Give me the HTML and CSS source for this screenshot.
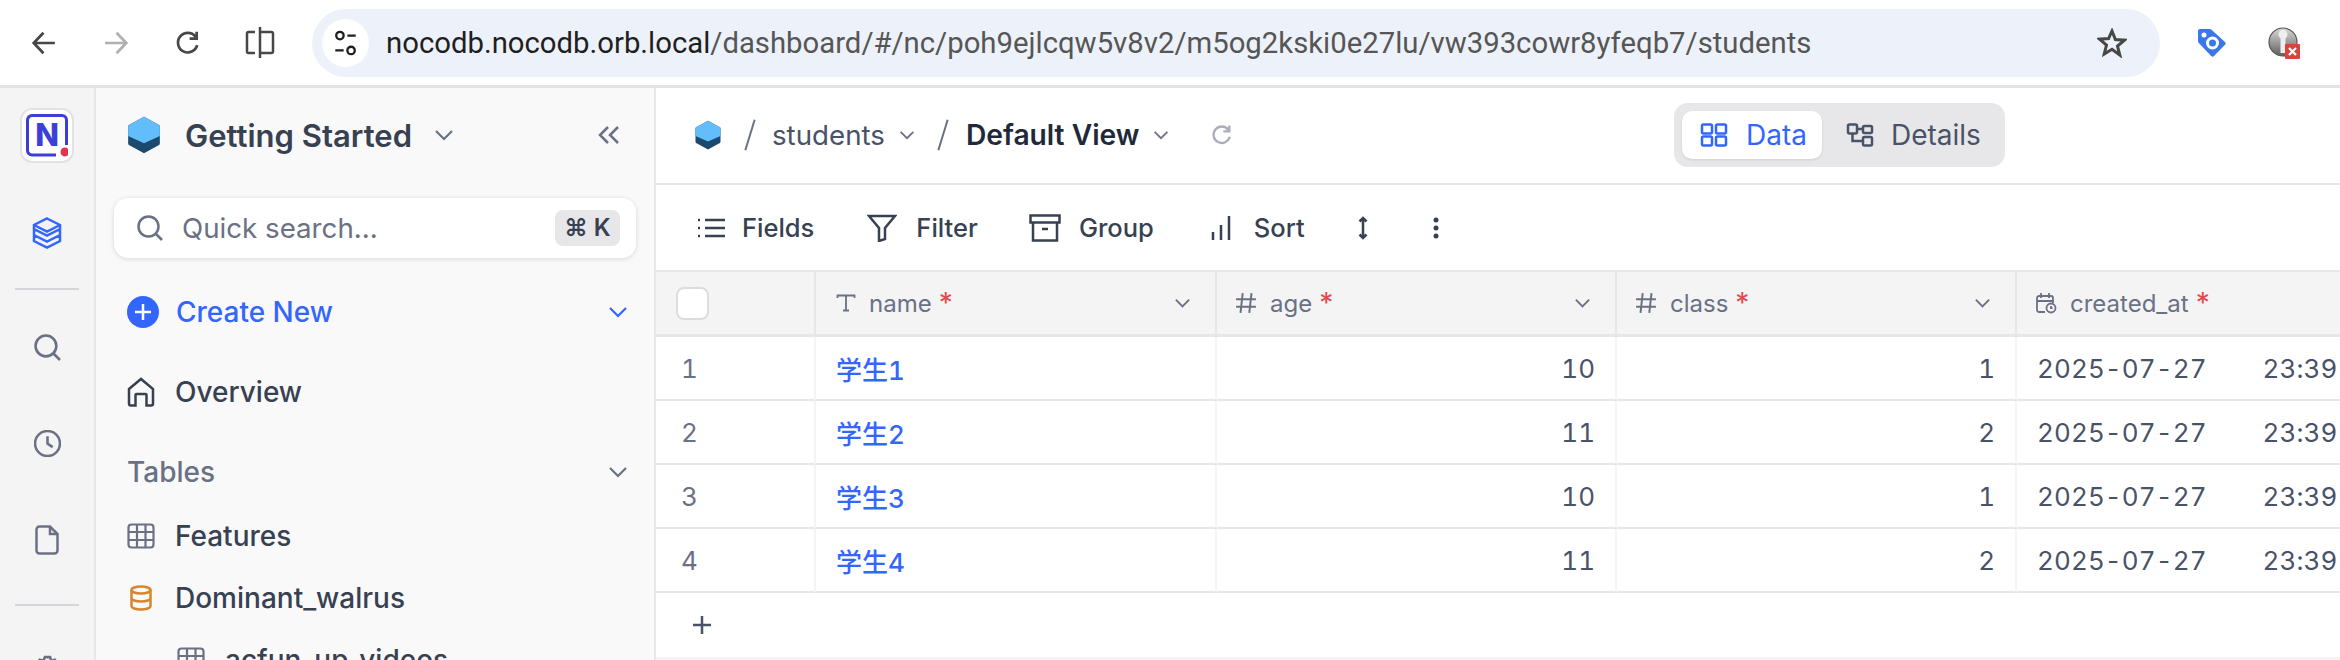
FILE: index.html
```html
<!DOCTYPE html>
<html lang="en">
  <head>
    <meta charset="UTF-8" />
    <meta name="viewport" content="width=device-width, initial-scale=1.0" />
    <title>students - NocoDB</title>
    <link rel="stylesheet" href="styles.css">
  </head>
  <body>
    <header class="browser-bar">
      <div class="nav-buttons">
        <svg class="nav-icon" viewBox="0 0 24 24"><path d="M22 12H3M11.5 2.5 2.5 12l9 9.5" /></svg>
        <svg class="nav-icon nav-icon-off" viewBox="0 0 24 24"><path d="M2 12h19M12.5 2.5l9 9.5-9 9.5" /></svg>
        <svg class="nav-icon" viewBox="0 0 24 24"><path d="M20.5 14a9 9 0 1 1-1.6-7.8M20 1.5V8h-6.5" /></svg>
        <svg class="nav-icon nav-icon-split" viewBox="0 0 30 33"><path d="M10 6H3.500a1.500 1.500 0 0 0-1.500 1.500v18a1.500 1.500 0 0 0 1.500 1.500H10M15 1v31M15 6h11.500a1.500 1.500 0 0 1 1.500 1.500v18a1.500 1.500 0 0 1-1.500 1.500H15" /></svg>
      </div>
      <div class="address">
        <span class="site-button">
          <svg class="site-icon" viewBox="0 0 24 28"><circle cx="6" cy="6" r="4" /><path d="M14 6h9M1 22h9" /><circle cx="18" cy="22" r="4" /></svg>
        </span>
        <span class="url"><span class="url-host">nocodb.nocodb.orb.local</span>/dashboard/#/nc/poh9ejlcqw5v8v2/m5og2kski0e27lu/vw393cowr8yfeqb7/students</span>
        <svg class="star-icon" viewBox="0 0 30 30"><path d="M15 3l3.400 8.600 9.100.6-7 5.900 2.300 8.900L15 21.200l-7.800 4.800 2.300-8.900-7-5.900 9.100-.6z" /></svg>
      </div>
      <svg class="ext-tag" viewBox="0 0 28 28"><path d="M2 0h9.500a3 3 0 0 1 2 .8L27 13a2 2 0 0 1 0 2.800L16 27a2 2 0 0 1-2.800 0L.8 14a3 3 0 0 1-.8-2V2a2 2 0 0 1 2-2z" fill="#3b78e7" /><circle cx="6" cy="6" r="2.500" fill="#fff" /><circle cx="14.500" cy="14" r="5" fill="none" stroke="#fff" stroke-width="3" /></svg>
      <svg class="ext-key" viewBox="0 0 32 32">
        <defs><linearGradient id="keyFill" x1="0" x2="0" y1="0" y2="1"><stop offset="0" stop-color="#d8d8d8" /><stop offset="1" stop-color="#5f5f5f" /></linearGradient></defs>
        <circle cx="15" cy="15" r="14" fill="url(#keyFill)" stroke="#555" stroke-width="1.200" />
        <path d="M15 3a4.500 4.500 0 0 0-2.500 8.200V26h5V11.200A4.500 4.500 0 0 0 15 3z" fill="#eee" />
        <rect x="17" y="17" width="15" height="15" rx="1" fill="#d8453a" />
        <path d="M21 21l7 7M28 21l-7 7" stroke="#fff" stroke-width="2.200" />
      </svg>
    </header>

    <div class="app">
      <nav class="rail">
        <div class="rail-logo">
          <svg class="logo-mark" viewBox="0 0 42 43">
            <path d="M30 41H6a4.500 4.500 0 0 1-4.500-4.500V6A4.500 4.500 0 0 1 6 1.500h30A4.500 4.500 0 0 1 40.500 6v25" fill="none" stroke="#3b3fd8" stroke-width="3" />
            <text x="21" y="32" text-anchor="middle" class="logo-letter">N</text>
            <circle cx="39" cy="38" r="4.500" fill="#e3344f" />
          </svg>
        </div>
        <svg class="rail-icon rail-layers" viewBox="0 0 30 32"><path d="M15 1.500 28 8v4l-13 6.500L2 12V8zM2 8l13 6.500L28 8M2 12v6l13 6.500L28 18v-6M2 18v6l13 6.500L28 24v-6" /></svg>
        <div class="rail-line"></div>
        <svg class="rail-icon rail-search" viewBox="0 0 26 26"><circle cx="11.500" cy="11.500" r="10" /><path d="M19 19l6 6" /></svg>
        <svg class="rail-icon rail-clock" viewBox="0 0 26 26"><circle cx="13" cy="13" r="12" /><path d="M13 6v7l5 3.500" /></svg>
        <svg class="rail-icon rail-file" viewBox="0 0 24 30"><path d="M15 1.500H4.500a3 3 0 0 0-3 3v21a3 3 0 0 0 3 3h15a3 3 0 0 0 3-3V9zM15 1.500V9h7.500" /></svg>
        <div class="rail-line rail-line-low"></div>
        <svg class="rail-icon rail-gear" viewBox="0 0 26 26"><circle cx="13" cy="13" r="4" /><path d="M10.500 2h5l1 3.500 3.500-1 2.500 4-2.500 2.500v4l2.500 2.500-2.500 4-3.500-1-1 3.500h-5l-1-3.500-3.500 1-2.500-4L5.500 15v-4L3 8.500l2.500-4 3.500 1z" /></svg>
      </nav>

      <aside class="sidebar">
        <div class="base-head">
          <svg class="hex hex-big" viewBox="0 0 24 24"><use href="#hexShape" /></svg>
          <span class="base-name">Getting Started</span>
          <svg class="chev chev-base" viewBox="0 0 20 12"><path d="M2 2l8 8 8-8" /></svg>
          <svg class="collapse" viewBox="0 0 22 20"><path d="M10 2 2 10l8 8M20 2l-8 8 8 8" /></svg>
        </div>
        <div class="quick-search">
          <svg class="search-glass" viewBox="0 0 26 26"><circle cx="11.500" cy="11.500" r="10" /><path d="M19 19l6 6" /></svg>
          <span class="quick-text">Quick search...</span>
          <span class="kbd">⌘ K</span>
        </div>
        <div class="side-row row-create">
          <svg class="plus-circle" viewBox="0 0 32 32"><circle cx="16" cy="16" r="16" fill="#3366ff" /><path d="M16 8v16M8 16h16" stroke="#fff" stroke-width="2.500" /></svg>
          <span class="create-text">Create New</span>
          <svg class="chev chev-side chev-blue" viewBox="0 0 20 12"><path d="M2 2l8 8 8-8" /></svg>
        </div>
        <div class="side-row row-overview">
          <svg class="side-icon icon-home" viewBox="0 0 28 30"><path d="M2 12 14 2l12 10v14.500a2 2 0 0 1-2 2h-4.500V18a1 1 0 0 0-1-1h-9a1 1 0 0 0-1 1v10.500H4a2 2 0 0 1-2-2z" /></svg>
          <span class="side-text">Overview</span>
        </div>
        <div class="side-row row-tables">
          <span class="tables-text">Tables</span>
          <svg class="chev chev-side" viewBox="0 0 20 12"><path d="M2 2l8 8 8-8" /></svg>
        </div>
        <div class="side-row row-features">
          <svg class="side-icon icon-table" viewBox="0 0 28 26"><rect x="1.500" y="1.500" width="25" height="23" rx="3" /><path d="M1.500 9h25M1.500 17h25M10 1.500v23M18.500 1.500v23" /></svg>
          <span class="side-text">Features</span>
        </div>
        <div class="side-row row-dominant">
          <svg class="side-icon icon-db" viewBox="0 0 22 26"><ellipse cx="11" cy="5" rx="9.500" ry="3.500" /><path d="M1.500 5v16c0 2 4.300 3.500 9.500 3.500s9.500-1.500 9.500-3.500V5M1.500 13c0 2 4.300 3.500 9.500 3.500s9.500-1.500 9.500-3.500" /></svg>
          <span class="side-text">Dominant_walrus</span>
        </div>
        <div class="side-row row-nested">
          <svg class="side-icon icon-table" viewBox="0 0 28 26"><rect x="1.500" y="1.500" width="25" height="23" rx="3" /><path d="M1.500 9h25M1.500 17h25M10 1.500v23M18.500 1.500v23" /></svg>
          <span class="side-text">acfun_up_videos</span>
        </div>
      </aside>

      <main class="content">
        <div class="crumbs">
          <svg class="hex hex-small" viewBox="0 0 24 24"><use href="#hexShape" /></svg>
          <span class="slash"></span>
          <span class="crumb-table">students</span>
          <svg class="chev chev-crumb" viewBox="0 0 20 12"><path d="M2 2l8 8 8-8" /></svg>
          <span class="slash slash-two"></span>
          <span class="crumb-view">Default View</span>
          <svg class="chev chev-crumb" viewBox="0 0 20 12"><path d="M2 2l8 8 8-8" /></svg>
          <svg class="reload" viewBox="0 0 24 24"><path d="M20.500 14a9 9 0 1 1-1.600-7.800M20 1.500V8h-6.500" /></svg>
          <div class="tabs">
            <div class="tab tab-on">
              <svg class="tab-icon" viewBox="0 0 28 24"><rect x="2" y="1.500" width="10" height="9" rx="1.500" /><rect x="16" y="1.500" width="10" height="9" rx="1.500" /><rect x="2" y="13.500" width="10" height="9" rx="1.500" /><rect x="16" y="13.500" width="10" height="9" rx="1.500" /></svg>
              <span>Data</span>
            </div>
            <div class="tab">
              <svg class="tab-icon" viewBox="0 0 28 24"><rect x="2" y="1.500" width="9" height="9" rx="1.500" /><rect x="17" y="3" width="9" height="7" rx="1.500" /><rect x="17" y="14" width="9" height="8.500" rx="1.500" /><path d="M11 6h6M6.500 10.500V18H17" /></svg>
              <span>Details</span>
            </div>
          </div>
        </div>

        <div class="toolbar">
          <div class="tool tool-fields">
            <svg class="tool-icon icon-list" viewBox="0 0 28 20"><path d="M8 2h20M8 10h20M8 18h20M1 2h2M1 10h2M1 18h2" /></svg>
            <span>Fields</span>
          </div>
          <div class="tool tool-filter">
            <svg class="tool-icon icon-filter" viewBox="0 0 30 28"><path d="M2 2h26L18 14v11l-6 2V14z" /></svg>
            <span>Filter</span>
          </div>
          <div class="tool tool-group">
            <svg class="tool-icon icon-group" viewBox="0 0 32 28"><rect x="1.500" y="1.500" width="29" height="7" /><path d="M4 8.500v18h24v-18M13 15h6" /></svg>
            <span>Group</span>
          </div>
          <div class="tool tool-sort">
            <svg class="tool-icon icon-sort" viewBox="0 0 20 26"><path d="M2 17v8M10 10v15M18 1v24" /></svg>
            <span>Sort</span>
          </div>
          <svg class="tool-icon icon-height" viewBox="0 0 10 24"><path d="M5 2v20M1.500 5.500 5 2l3.500 3.500M1.500 18.500 5 22l3.500-3.500" /></svg>
          <svg class="icon-dots" viewBox="0 0 8 22"><circle cx="4" cy="3" r="2.500" /><circle cx="4" cy="11" r="2.500" /><circle cx="4" cy="19" r="2.500" /></svg>
        </div>

        <div class="grid">
          <div class="cell head num-col"><span class="checkbox"></span></div>
          <div class="cell head">
            <svg class="type-icon" viewBox="0 0 20 18"><path d="M1.500 4V1.500h17V4M10 1.500v15M7 16.500h6" /></svg>
            <span class="col-name">name</span><span class="req">*</span>
            <svg class="chev chev-col" viewBox="0 0 20 12"><path d="M2 2l8 8 8-8" /></svg>
          </div>
          <div class="cell head">
            <svg class="type-icon type-wide" viewBox="0 0 20 20"><path d="M7 1 5 19M15 1l-2 18M1 6.500h18M1 13.500h18" /></svg>
            <span class="col-name">age</span><span class="req">*</span>
            <svg class="chev chev-col" viewBox="0 0 20 12"><path d="M2 2l8 8 8-8" /></svg>
          </div>
          <div class="cell head">
            <svg class="type-icon type-wide" viewBox="0 0 20 20"><path d="M7 1 5 19M15 1l-2 18M1 6.500h18M1 13.500h18" /></svg>
            <span class="col-name">class</span><span class="req">*</span>
            <svg class="chev chev-col" viewBox="0 0 20 12"><path d="M2 2l8 8 8-8" /></svg>
          </div>
          <div class="cell head">
            <svg class="type-icon type-wide" viewBox="0 0 22 22"><path d="M10 20H4a2 2 0 0 1-2-2V6a2 2 0 0 1 2-2h12a2 2 0 0 1 2 2v5M6 1v5M14 1v5M2 9h16" /><circle cx="16" cy="16" r="4.500" /><path d="M16 14v2h1.500" /></svg>
            <span class="col-name">created_at</span><span class="req">*</span>
          </div>

          <div class="cell num-col row-num">1</div>
          <div class="cell"><a class="pk">学生1</a></div>
          <div class="cell cell-right">10</div>
          <div class="cell cell-right">1</div>
          <div class="cell cell-date"><span>2025-07-27</span><span class="time">23:39</span></div>

          <div class="cell num-col row-num">2</div>
          <div class="cell"><a class="pk">学生2</a></div>
          <div class="cell cell-right">11</div>
          <div class="cell cell-right">2</div>
          <div class="cell cell-date"><span>2025-07-27</span><span class="time">23:39</span></div>

          <div class="cell num-col row-num">3</div>
          <div class="cell"><a class="pk">学生3</a></div>
          <div class="cell cell-right">10</div>
          <div class="cell cell-right">1</div>
          <div class="cell cell-date"><span>2025-07-27</span><span class="time">23:39</span></div>

          <div class="cell num-col row-num">4</div>
          <div class="cell"><a class="pk">学生4</a></div>
          <div class="cell cell-right">11</div>
          <div class="cell cell-right">2</div>
          <div class="cell cell-date"><span>2025-07-27</span><span class="time">23:39</span></div>
        </div>

        <div class="add-row">
          <svg class="add-icon" viewBox="0 0 20 20"><path d="M10 1v18M1 10h18" /></svg>
        </div>
      </main>
    </div>

    <svg class="svg-defs" width="0" height="0">
      <symbol id="hexShape" viewBox="0 0 24 24">
        <path d="M12 .5l9.500 5.200a1 1 0 0 1 .5.900v10.800a1 1 0 0 1-.5.900L12 23.500 2.500 18.300a1 1 0 0 1-.5-.900V6.600a1 1 0 0 1 .5-.900z" fill="#1b4a6d" />
        <path d="M12 .5l9.500 5.200a1 1 0 0 1 .5.900v6.100L12 17.200 2 12.700V6.600a1 1 0 0 1 .5-.900z" fill="#63bdfb" />
      </symbol>
    </svg>
  </body>
</html>
```

FILE: styles.css
```css
html {
  background-color: #ffffff;
  font-family: "Inter", "Noto Sans CJK SC", sans-serif;
}

body {
  margin: 0;
  height: 660px;
  overflow: hidden;
  display: flex;
  flex-direction: column;
}

svg {
  flex: none;
  fill: none;
  stroke: currentColor;
  stroke-width: 2.5;
}

.svg-defs {
  position: absolute;
}

/* browser chrome */
.browser-bar {
  flex: none;
  height: 85px;
  border-bottom: 3px solid #e3e3e3;
  display: flex;
  align-items: center;
}

.nav-buttons {
  width: 312px;
  padding-left: 8px;
  box-sizing: border-box;
  display: flex;
  align-items: center;
  color: #474747;
}

.nav-icon {
  width: 26px;
  height: 26px;
  margin: 0 23px;
}

.nav-icon-off {
  color: #b0b0b0;
}

.nav-icon-split {
  width: 30px;
  height: 33px;
  margin: 0 21px;
}

.address {
  width: 1848px;
  height: 68px;
  border-radius: 34px;
  background-color: #edf2fa;
  display: flex;
  align-items: center;
  padding-left: 10px;
  box-sizing: border-box;
}

.site-button {
  width: 47px;
  height: 48px;
  border-radius: 50%;
  background-color: #ffffff;
  display: flex;
  align-items: center;
  justify-content: center;
}

.site-icon {
  width: 23px;
  height: 26px;
  color: #1f1f1f;
}

.url {
  margin-left: 17px;
  width: 1711px;
  font-family: "Roboto", sans-serif;
  font-size: 29.3px;
  color: #565656;
  white-space: nowrap;
}

.url-host {
  color: #1f1f1f;
}

.star-icon {
  width: 30px;
  height: 30px;
  color: #474747;
  stroke-width: 3;
}

.ext-tag {
  width: 28px;
  height: 28px;
  margin-left: 38px;
  stroke: none;
}

.ext-key {
  width: 32px;
  height: 32px;
  margin-left: 42px;
  stroke: none;
}

/* app shell */
.app {
  flex: 1;
  min-height: 0;
  display: flex;
}

.rail {
  flex: none;
  width: 94px;
  border-right: 2px solid #e7e7e9;
  background-color: #f4f4f5;
  overflow: hidden;
  display: flex;
  flex-direction: column;
  align-items: center;
  color: #6a7184;
}

.rail-logo {
  flex: none;
  width: 54px;
  height: 55px;
  margin-top: 20px;
  box-sizing: border-box;
  border: 2px solid #e2e2e4;
  border-radius: 12px;
  background-color: #ffffff;
  display: flex;
  align-items: center;
  justify-content: center;
}

.logo-mark {
  width: 42px;
  height: 43px;
  stroke: none;
}

.logo-letter {
  font-family: "Inter", sans-serif;
  font-size: 31px;
  font-weight: 800;
  fill: #3b3fd8;
}

.rail-icon {
  width: 27px;
  height: 27px;
}

.rail-layers {
  width: 30px;
  height: 32px;
  margin-top: 54px;
  color: #3366ff;
}

.rail-line {
  flex: none;
  width: 64px;
  height: 2px;
  margin-top: 39px;
  background-color: #d5d5d9;
}

.rail-search {
  margin-top: 44px;
}

.rail-clock {
  margin-top: 69px;
}

.rail-file {
  width: 24px;
  height: 30px;
  margin-top: 68px;
}

.rail-line-low {
  margin-top: 49px;
}

.rail-gear {
  margin-top: 49px;
}

/* sidebar */
.sidebar {
  flex: none;
  width: 514px;
  border-right: 2px solid #e7e7e9;
  background-color: #f9f9fa;
  overflow: hidden;
  padding: 0 26px 0 18px;
}

.base-head {
  height: 94px;
  display: flex;
  align-items: center;
  padding-left: 11px;
}

.hex-big {
  width: 38px;
  height: 38px;
  stroke: none;
}

.base-name {
  margin-left: 22px;
  font-size: 31px;
  font-weight: 600;
  color: #374151;
}

.chev {
  color: #6a7184;
  stroke-width: 2.2;
}

.chev-base {
  width: 20px;
  height: 12px;
  margin-left: 22px;
}

.collapse {
  width: 22px;
  height: 20px;
  margin-left: auto;
  margin-right: 8px;
  color: #6a7184;
}

.quick-search {
  height: 60px;
  margin-top: 16px;
  border-radius: 14px;
  background-color: #ffffff;
  box-shadow: 0 1px 5px rgba(0, 0, 0, 0.14);
  display: flex;
  align-items: center;
  padding: 0 16px 0 23px;
  width: 522px;
  box-sizing: border-box;
}

.search-glass {
  width: 26px;
  height: 26px;
  color: #6a7184;
}

.quick-text {
  margin-left: 19px;
  font-size: 27.7px;
  color: #6a7184;
}

.kbd {
  margin-left: auto;
  width: 65px;
  height: 36px;
  border-radius: 8px;
  background-color: #e7e7e9;
  font-size: 24px;
  font-weight: 600;
  line-height: 36px;
  text-align: center;
  color: #374151;
}

.side-row {
  height: 64px;
  display: flex;
  align-items: center;
  width: 514px;
  padding-left: 13px;
  box-sizing: border-box;
}

.row-create {
  margin-top: 22px;
}

.plus-circle {
  width: 32px;
  height: 32px;
  stroke: none;
}

.create-text {
  margin-left: 17px;
  font-size: 28px;
  font-weight: 500;
  color: #3366ff;
}

.chev-side {
  width: 20px;
  height: 12px;
  margin-left: auto;
}

.chev-blue {
  color: #3366ff;
}

.row-overview {
  margin-top: 16px;
}

.side-icon {
  width: 28px;
  height: 28px;
  color: #6a7184;
  stroke-width: 2.2;
}

.icon-home {
  color: #374151;
  height: 30px;
  stroke-width: 2.5;
}

.side-text {
  margin-left: 20px;
  font-size: 28px;
  font-weight: 500;
  color: #374151;
}

.row-tables {
  margin-top: 16px;
}

.tables-text {
  font-size: 28px;
  font-weight: 500;
  color: #6a7184;
}

.row-dominant {
  height: 60px;
}

.icon-db {
  color: #d6862b;
  width: 22px;
  height: 26px;
  margin-left: 3px;
  margin-right: 3px;
  stroke-width: 2.5;
}

.row-nested {
  padding-left: 63px;
}

/* main area */
.content {
  flex: 1;
  min-width: 0;
  overflow: hidden;
}

.crumbs {
  height: 93px;
  padding-bottom: 2px;
  border-bottom: 2px solid #e7e7e9;
  display: flex;
  align-items: center;
  padding-left: 37px;
}

.hex-small {
  width: 30px;
  height: 30px;
  stroke: none;
}

.slash {
  width: 2px;
  height: 32px;
  margin-left: 26px;
  background-color: #6a7184;
  transform: rotate(17deg);
}

.slash-two {
  margin-left: 27px;
}

.crumb-table {
  margin-left: 21px;
  font-size: 27.7px;
  color: #4a5268;
}

.chev-crumb {
  width: 16px;
  height: 10px;
  margin-left: 14px;
}

.crumb-view {
  margin-left: 22px;
  font-size: 28.2px;
  font-weight: 600;
  color: #1f293a;
}

.reload {
  width: 22px;
  height: 22px;
  margin-left: 42px;
  color: #a9aeb9;
}

.tabs {
  margin-left: auto;
  margin-right: 335px;
  width: 331px;
  height: 64px;
  box-sizing: border-box;
  padding: 8px;
  border-radius: 14px;
  background-color: #e7e7e9;
  display: flex;
  align-items: stretch;
}

.tab {
  display: flex;
  align-items: center;
  gap: 17px;
  padding: 0 24px;
  font-size: 28px;
  color: #4a5268;
}

.tab-on {
  gap: 18px;
  padding: 0 18px;
  width: 140px;
  box-sizing: border-box;
  border-radius: 10px;
  background-color: #ffffff;
  color: #3366ff;
  box-shadow: 0 1px 3px rgba(0, 0, 0, 0.1);
}

.tab-icon {
  width: 28px;
  height: 24px;
}

.toolbar {
  height: 85px;
  display: flex;
  align-items: center;
  border-bottom: 2px solid #e7e7e9;
  padding-left: 41px;
  font-size: 25.5px;
  font-weight: 500;
  color: #374151;
}

.tool {
  display: flex;
  align-items: center;
}

.tool-icon {
  color: #374151;
}

.icon-list {
  width: 28px;
  height: 20px;
}

.tool-fields span {
  margin-left: 17px;
}

.tool-filter {
  margin-left: 53px;
}

.icon-filter {
  width: 30px;
  height: 28px;
}

.tool-filter span {
  margin-left: 19px;
}

.tool-group {
  margin-left: 51px;
}

.icon-group {
  width: 32px;
  height: 28px;
}

.tool-group span {
  margin-left: 18px;
}

.tool-sort {
  margin-left: 57px;
}

.icon-sort {
  width: 20px;
  height: 26px;
}

.tool-sort span {
  margin-left: 23px;
}

.icon-height {
  width: 10px;
  height: 24px;
  margin-left: 53px;
}

.icon-dots {
  width: 8px;
  height: 22px;
  margin-left: 64px;
  fill: #374151;
  stroke: none;
}

/* table */
.grid {
  display: grid;
  grid-template-columns: 160px 401px 400px 400px 400px;
  grid-template-rows: 65px repeat(4, 64px);
  width: 1761px;
}

.cell {
  display: flex;
  align-items: center;
  box-sizing: border-box;
  padding: 0 20px;
  border-right: 2px solid #f4f4f5;
  border-bottom: 2px solid #e7e7e9;
  font-size: 26px;
  font-variant-numeric: tabular-nums;
  color: #4a5268;
}

.head {
  background-color: #f4f4f5;
  border-right-color: #e7e7e9;
  border-bottom-width: 3px;
  font-size: 24px;
  color: #6a7184;
}

.num-col {
  padding-left: 25px;
}

.head.num-col {
  padding-left: 20px;
}

.checkbox {
  width: 33px;
  height: 33px;
  box-sizing: border-box;
  border: 2px solid #dcdcde;
  border-radius: 8px;
  background-color: #ffffff;
}

.row-num {
  color: #6a7184;
}

.type-icon {
  width: 20px;
  height: 20px;
  stroke-width: 1.8;
  color: #6a7184;
}

.type-wide {
  width: 22px;
  height: 22px;
  margin-left: -2px;
}

.col-name {
  margin-left: 13px;
}

.req {
  margin-left: 5px;
  font-size: 28px;
  line-height: 1;
  color: #e5484d;
}

.chev-col {
  width: 17px;
  height: 10px;
  margin-left: auto;
  margin-right: 4px;
}

.pk {
  font-size: 26px;
  font-weight: 500;
  color: #3366ff;
}

.cell-right {
  justify-content: flex-end;
}

.cell-date {
  letter-spacing: 0.1px;
}

.time {
  margin-left: 56px;
}

.add-row {
  height: 67px;
  border-bottom: 3px solid #f4f4f5;
  display: flex;
  align-items: center;
  padding-left: 36px;
  box-sizing: border-box;
}

.add-icon {
  width: 20px;
  height: 20px;
  color: #4a5268;
}
```
